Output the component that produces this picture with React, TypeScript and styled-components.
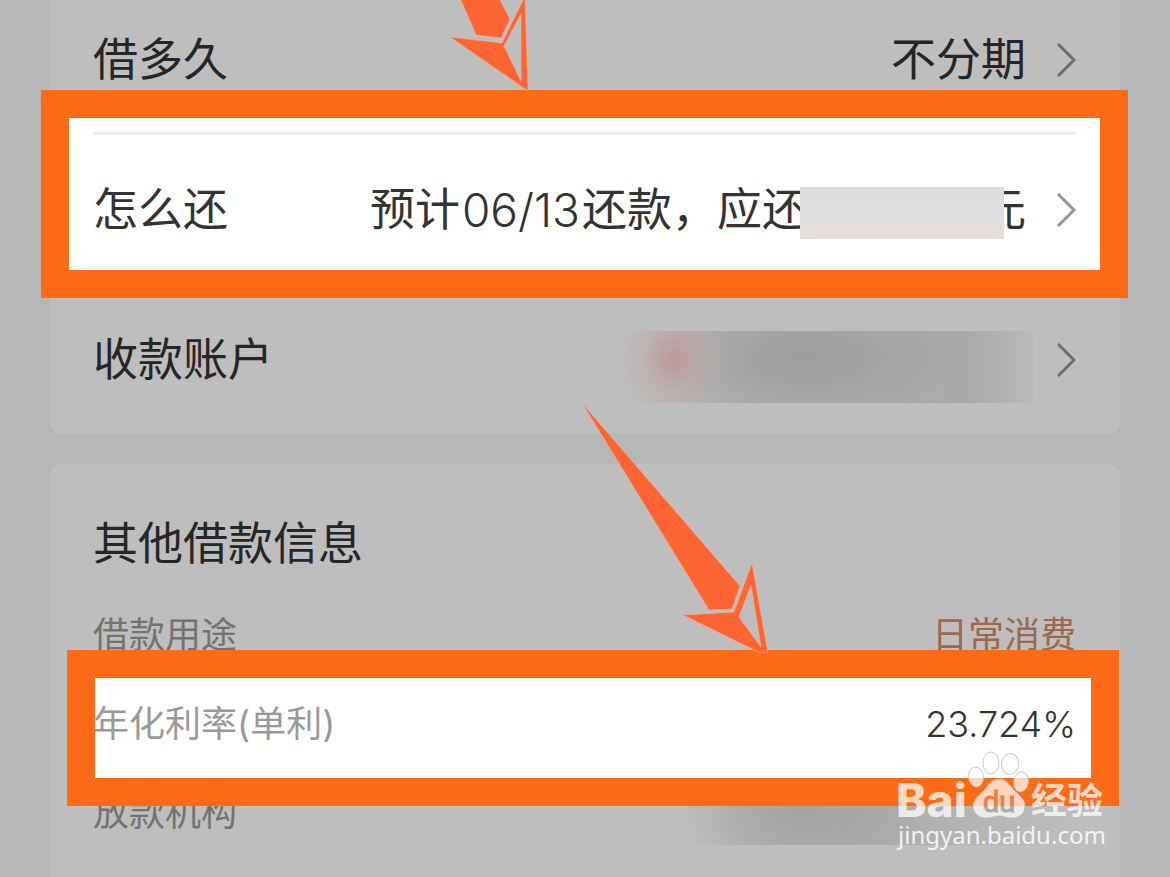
import React from "react";
import styled, { createGlobalStyle, css } from "styled-components";

const GlobalStyle = createGlobalStyle`
  *, *::before, *::after { box-sizing: border-box; }
  body {
    margin: 0;
    background: #b4b7b6;
    color: #262626;
    font-family: Inter, "Noto Sans CJK SC", sans-serif;
  }
`;

const Page = styled.main`
  position: relative;
  display: flex;
  flex-direction: column;
  gap: 30px;
  min-height: 100vh;
  padding: 0 50px;
  overflow: hidden;
`;

const Card = styled.section<{ $place: "top" | "bottom" }>`
  padding: 0 44px 0 43px;
  background: #bebebe;
  ${(p) =>
    p.$place === "top"
      ? css`
          border-radius: 0 0 12px 12px;
        `
      : css`
          flex: 1;
          border-radius: 12px 12px 0 0;
        `}
`;

const Row = styled.button<{ $first?: boolean; $lit?: boolean }>`
  position: relative;
  display: flex;
  align-items: center;
  width: 100%;
  height: ${(p) => (p.$first ? 118 : 150)}px;
  margin: 0 0 ${(p) => (p.$first ? 16 : 0)}px;
  padding: 2px 0 0;
  border: 0;
  background: none;
  color: ${(p) => (p.$lit ? "#333" : "#262626")};
  font: inherit;
  font-size: 45px;
  line-height: 60px;
  text-align: left;
  white-space: nowrap;
  cursor: pointer;
`;

const Label = styled.span`
  position: relative;
  z-index: 2;
`;

const Value = styled.span`
  position: relative;
  z-index: 2;
  display: flex;
  margin-left: auto;
  margin-right: 30px;
`;

const DueDate = styled.span`
  padding: 0 2px;
  font-size: 46px;
  font-weight: 300;
`;

const Rate = styled.span`
  font-weight: 300;
`;

const Chevron = styled.svg`
  position: relative;
  z-index: 2;
  flex: none;
  width: 20px;
  height: 34px;
  fill: none;
  stroke: #000;
  stroke-opacity: 0.42;
  stroke-width: 3;
`;

const Frame = styled.span<{ $area: "repay" | "rate" }>`
  position: absolute;
  z-index: 1;
  inset: ${(p) => (p.$area === "repay" ? "-44px -52px -14px -52px" : "-29px -43px -38px -26px")};
  border: 28px solid #ff6a17;
  background: #fff;
`;

const Divider = styled.span`
  position: absolute;
  z-index: 2;
  top: -2px;
  left: 0;
  right: 0;
  height: 3px;
  background: #eeeded;
`;

const HiddenAmount = styled.span`
  position: relative;
  width: 174px;

  &::before {
    content: "";
    position: absolute;
    z-index: 1;
    inset: 7px -23px 1px -7px;
    background: linear-gradient(#dcdcdd, #e0dfe0 60%, #e8deda);
  }
`;

const HiddenAccount = styled.span`
  width: 410px;
  height: 72px;
  margin-left: auto;
  margin-right: 23px;
  margin-top: 14px;
  background:
    radial-gradient(ellipse 54px 60px at 50px 28px, rgba(190, 150, 150, 0.9), rgba(190, 165, 165, 0.55) 50%, transparent),
    radial-gradient(ellipse 150px 70px at 180px 26px, #9c9c9c, transparent),
    linear-gradient(90deg, transparent 5%, #b0b0b0 110px, #a9a9a9 340px, #b9b9b9);
`;

const HiddenLender = styled.span`
  width: 392px;
  height: 64px;
  margin-left: auto;
  background:
    radial-gradient(ellipse 120px 60px at 120px 30px, #a2a3a3, transparent),
    linear-gradient(90deg, transparent, #afb0b0 90px, #abadac 200px, #bebebe);
`;

const Title = styled.h2`
  margin: 0;
  padding: 50px 0 16px;
  font-size: 45px;
  font-weight: 400;
  line-height: 60px;
`;

const Details = styled.dl`
  margin: 0;
`;

const Detail = styled.div`
  position: relative;
  display: flex;
  align-items: center;
  justify-content: space-between;
  height: 89px;
  font-size: 36px;
  line-height: 48px;
`;

const Term = styled.dt<{ $lit?: boolean }>`
  position: relative;
  z-index: ${(p) => (p.$lit ? 2 : 0)};
  color: ${(p) => (p.$lit ? "#999" : "#737373")};
`;

const Data = styled.dd<{ $lit?: boolean }>`
  position: relative;
  z-index: ${(p) => (p.$lit ? 2 : 0)};
  display: flex;
  margin: 0 0 0 auto;
  color: ${(p) => (p.$lit ? "#333" : "#9b694c")};
`;

const Pointer = styled.svg<{ $at: "repay" | "rate" }>`
  position: absolute;
  z-index: 3;
  pointer-events: none;
  fill: #ff6532;
  ${(p) =>
    p.$at === "repay"
      ? css`
          top: 0;
          left: 440px;
          width: 100px;
          height: 96px;
        `
      : css`
          top: 400px;
          left: 570px;
          width: 210px;
          height: 260px;
        `}
`;

const Watermark = styled.svg`
  position: absolute;
  z-index: 4;
  right: 60px;
  bottom: 20px;
  width: 220px;
  height: 110px;
  overflow: visible;
  pointer-events: none;
`;

const Arrow = () => (
  <Chevron viewBox="0 0 20 34" aria-hidden="true">
    <path d="M2 1 18 17 2 33" />
  </Chevron>
);

export default function App() {
  return (
    <>
      <GlobalStyle />
      <Page lang="zh-CN">
        <Card $place="top">
          <Row type="button" $first>
            <Label>借多久</Label>
            <Value>不分期</Value>
            <Arrow />
          </Row>
          <Row type="button" $lit>
            <Frame $area="repay" />
            <Divider />
            <Label>怎么还</Label>
            <Value>
              预计<DueDate>06/13</DueDate>还款，应还
              <HiddenAmount />元
            </Value>
            <Arrow />
          </Row>
          <Row type="button">
            <Label>收款账户</Label>
            <HiddenAccount />
            <Arrow />
          </Row>
        </Card>

        <Card $place="bottom">
          <Title>其他借款信息</Title>
          <Details>
            <Detail>
              <Term>借款用途</Term>
              <Data>日常消费</Data>
            </Detail>
            <Detail>
              <Frame $area="rate" />
              <Term $lit>年化利率(单利)</Term>
              <Data $lit>
                <Rate>23.724%</Rate>
              </Data>
            </Detail>
            <Detail>
              <Term>放款机构</Term>
              <Data>
                <HiddenLender />
              </Data>
            </Detail>
          </Details>
        </Card>

        <Pointer $at="repay" viewBox="440 0 100 96" aria-hidden="true">
          <g stroke="#f0b49b" strokeOpacity="0.6" strokeWidth="1" fillRule="evenodd">
            <path d="M460-2H499L510 19 501 38 476 35Z" />
            <path d="M450 37 502 43 525-4 528 91ZM521 14 504 46 521 81Z" />
          </g>
        </Pointer>
        <Pointer $at="rate" viewBox="570 400 210 260" aria-hidden="true">
          <g stroke="#f0b49b" strokeOpacity="0.6" strokeWidth="1" fillRule="evenodd">
            <path d="M582 403 740 586 732 609 709 610Z" />
            <path d="M683 615 734 612 752 563 768 653 758 652ZM751 585 739 617 761 647Z" />
          </g>
        </Pointer>

        <Watermark viewBox="890 747 220 110" role="img" aria-label="Baidu 经验">
          <defs>
            <linearGradient id="duFill" gradientUnits="userSpaceOnUse" x1="0" y1="780" x2="0" y2="820">
              <stop offset="0.64" stopColor="#ee7b3c" />
              <stop offset="0.64" stopColor="#a9aaaa" />
            </linearGradient>
          </defs>
          <g fill="#fff" fillOpacity="0.72" stroke="#b5b5b5" strokeOpacity="0.7" strokeWidth="1">
            <ellipse cx="976" cy="777" rx="7.5" ry="10" transform="rotate(-8 976 777)" />
            <ellipse cx="991" cy="763" rx="8" ry="11" />
            <ellipse cx="1010" cy="764" rx="8.5" ry="10.5" transform="rotate(8 1010 764)" />
            <ellipse cx="1021" cy="782" rx="7.5" ry="10" transform="rotate(8 1021 782)" />
            <path d="M999 779c-7 0-10 5-14 10-6 6-12 10-12 17 0 8 6 12 13 12 5 0 8-2 13-2s8 2 13 2c8 0 13-5 13-12s-6-11-12-17c-4-5-7-10-14-10Z" />
          </g>
          <g fill="#fff" fillOpacity="0.75">
            <text x="896" y="817" fontSize="46" fontWeight="800" fontFamily="Inter, sans-serif">
              Bai
            </text>
            <text x="1031" y="814" fontSize="36" fontWeight="700" fontFamily='"Noto Sans CJK SC", sans-serif'>
              经验
            </text>
          </g>
          <text x="983" y="812" fontSize="29" fontWeight="500" fill="url(#duFill)" stroke="url(#duFill)" fontFamily='"Liberation Sans", sans-serif'>
            du
          </text>
          <text x="898" y="844" fontSize="24" fill="#fff" fillOpacity="0.85" fontFamily='"Noto Sans", sans-serif'>
            jingyan.baidu.com
          </text>
        </Watermark>
      </Page>
    </>
  );
}
